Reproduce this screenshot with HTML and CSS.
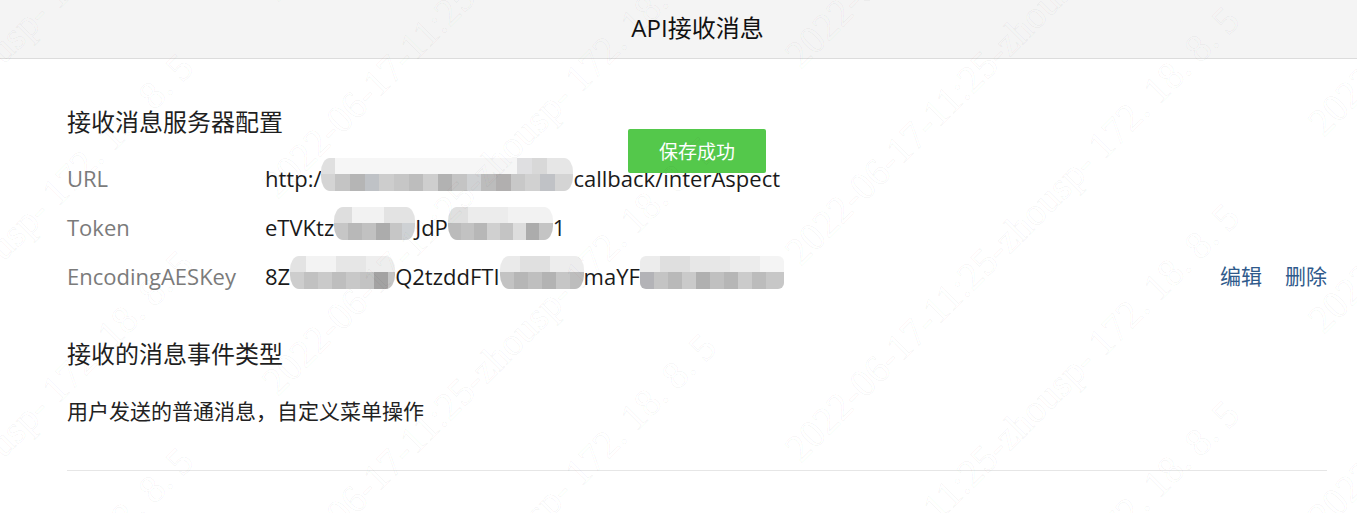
FILE: index.html
```html
<!DOCTYPE html>
<html lang="zh-CN">
<head>
<meta charset="utf-8">
<title>API接收消息</title>
<link rel="stylesheet" href="styles.css">
</head>
<body>
<div class="page">
  <header class="topbar">
    <h1 class="topbar-title">API接收消息</h1>
  </header>

  <main class="content">
    <section class="block">
      <h2 class="block-title">接收消息服务器配置</h2>
      <div class="row">
        <span class="label">URL</span>
        <span class="value">http:/<span class="mosaic mz-url"></span>callback/interAspect</span>
      </div>
      <div class="row">
        <span class="label">Token</span>
        <span class="value">eTVKtz<span class="mosaic mz-tok1"></span>JdP<span class="mosaic mz-tok2"></span>1</span>
      </div>
      <div class="row">
        <span class="label">EncodingAESKey</span>
        <span class="value">8Z<span class="mosaic mz-aes1"></span>Q2tzddFTI<span class="mosaic mz-aes2"></span>maYF<span class="mosaic mz-aes3"></span></span>
        <span class="actions"><a class="action">编辑</a><a class="action">删除</a></span>
      </div>
    </section>

    <section class="block block-events">
      <h2 class="block-title">接收的消息事件类型</h2>
      <p class="desc">用户发送的普通消息，自定义菜单操作</p>
    </section>

    <div class="divider"></div>
  </main>

  <div class="toast">保存成功</div>

  <div class="watermark" aria-hidden="true">
    <span class="wm" style="left:-246px;top:281px">2022-06-17-11:25-zhousp- 172. 18. 8. 5</span>
    <span class="wm" style="left:-246px;top:478px">2022-06-17-11:25-zhousp- 172. 18. 8. 5</span>
    <span class="wm" style="left:-246px;top:675px">2022-06-17-11:25-zhousp- 172. 18. 8. 5</span>
    <span class="wm" style="left:-246px;top:872px">2022-06-17-11:25-zhousp- 172. 18. 8. 5</span>
    <span class="wm" style="left:277px;top:-30px">2022-06-17-11:25-zhousp- 172. 18. 8. 5</span>
    <span class="wm" style="left:277px;top:167px">2022-06-17-11:25-zhousp- 172. 18. 8. 5</span>
    <span class="wm" style="left:277px;top:364px">2022-06-17-11:25-zhousp- 172. 18. 8. 5</span>
    <span class="wm" style="left:277px;top:561px">2022-06-17-11:25-zhousp- 172. 18. 8. 5</span>
    <span class="wm" style="left:277px;top:758px">2022-06-17-11:25-zhousp- 172. 18. 8. 5</span>
    <span class="wm" style="left:800px;top:37px">2022-06-17-11:25-zhousp- 172. 18. 8. 5</span>
    <span class="wm" style="left:800px;top:234px">2022-06-17-11:25-zhousp- 172. 18. 8. 5</span>
    <span class="wm" style="left:800px;top:431px">2022-06-17-11:25-zhousp- 172. 18. 8. 5</span>
    <span class="wm" style="left:800px;top:628px">2022-06-17-11:25-zhousp- 172. 18. 8. 5</span>
    <span class="wm" style="left:800px;top:825px">2022-06-17-11:25-zhousp- 172. 18. 8. 5</span>
    <span class="wm" style="left:1323px;top:105px">2022-06-17-11:25-zhousp- 172. 18. 8. 5</span>
    <span class="wm" style="left:1323px;top:302px">2022-06-17-11:25-zhousp- 172. 18. 8. 5</span>
    <span class="wm" style="left:1323px;top:499px">2022-06-17-11:25-zhousp- 172. 18. 8. 5</span>
  </div>
</div>
</body>
</html>
```

FILE: styles.css
```css
* {
  box-sizing: border-box;
}

html, body {
  margin: 0;
  padding: 0;
  background: #ffffff;
}

body {
  font-family: "Open Sans", "Noto Sans CJK SC", sans-serif;
  color: #1d1d1d;
  width: 1357px;
  height: 513px;
  overflow: hidden;
}

.page {
  position: relative;
  width: 1357px;
  height: 513px;
  overflow: hidden;
}

/* ---------- top bar ---------- */
.topbar {
  height: 59px;
  background: #f4f4f4;
  border-bottom: 1px solid #dcdcdc;
  display: flex;
  align-items: center;
  justify-content: center;
  padding-left: 38px;
}

.topbar-title {
  margin: 0;
  font-size: 24px;
  font-weight: normal;
  line-height: 32px;
  color: #111111;
  padding-bottom: 3px;
}

/* ---------- content ---------- */
.content {
  padding: 47px 30px 0 67px;
}

.block-title {
  margin: 0 0 16px;
  font-size: 24px;
  font-weight: normal;
  line-height: 32px;
  color: #1f1f1f;
}

.row {
  display: flex;
  align-items: center;
  height: 49px;
  line-height: 49px;
  font-size: 22px;
}

.label {
  width: 198px;
  flex: none;
  color: #7b7b7b;
}

.value {
  flex: 1;
  color: #1a1a1a;
  white-space: nowrap;
}

.actions {
  display: flex;
  gap: 23px;
  flex: none;
  font-size: 21px;
}

.action {
  color: #2f5a8b;
  cursor: pointer;
}

.block-events {
  margin-top: 37px;
}

.block-events .block-title {
  margin-bottom: 26px;
}

.desc {
  margin: 0;
  font-size: 21px;
  line-height: 30px;
  color: #222222;
}

.divider {
  margin-top: 44px;
  height: 1px;
  background: #e6e6e6;
}

/* ---------- mosaics (pixelated redactions) ---------- */
.mosaic {
  display: inline-block;
  height: 33px;
  vertical-align: -4px;
  border-radius: 9px / 14px;
}

.mz-url {
  width: 252px;
  background:
    linear-gradient(90deg, #e0e0e0 0 14px, #f6f6f6 14px 196px, #dfdfe1 196px 211px, #d8d8d8 211px 226px, #e6e6e6 226px 252px) top / 100% 16px no-repeat,
    linear-gradient(90deg, #d4d4d4 0 14px, #c4c4c4 14px 29px, #b5b5b5 29px 44px, #bfc2c6 44px 58px, #cdcdcd 58px 73px, #c6c6c6 73px 88px, #bdbdbd 88px 102px, #cecece 102px 117px, #b2b2b2 117px 131px, #c4c4c4 131px 146px, #cfd1d3 146px 160px, #bcbcbc 160px 175px, #b1afaf 175px 190px, #c8c8c8 190px 204px, #d1d1d1 204px 219px, #c0c2c6 219px 234px, #d4d4d4 234px 252px) bottom / 100% 17px no-repeat;
}

.mz-tok1 {
  width: 81px;
  background:
    linear-gradient(90deg, #dedede 0 18px, #f2f2f2 18px 50px, #e3e3e3 50px 81px) top / 100% 16px no-repeat,
    linear-gradient(90deg, #c6c6c6 0 14px, #b8b8b8 14px 28px, #c1c1c1 28px 42px, #acacac 42px 56px, #c6c6c6 56px 68px, #ced1d4 68px 81px) bottom / 100% 17px no-repeat;
}

.mz-tok2 {
  width: 105px;
  background:
    linear-gradient(90deg, #e0e0e0 0 20px, #ececec 20px 60px, #f2f2f2 60px 105px) top / 100% 16px no-repeat,
    linear-gradient(90deg, #bbbbbb 0 13px, #c2c2c2 13px 26px, #b7b7b7 26px 39px, #d0d0d0 39px 52px, #c4c4c4 52px 65px, #dddddd 65px 78px, #acacac 78px 91px, #c4c4c4 91px 105px) bottom / 100% 17px no-repeat;
}

.mz-aes1 {
  width: 105px;
  background:
    linear-gradient(90deg, #e3e3e3 0 16px, #f3f3f3 16px 46px, #e6e6e6 46px 76px, #eeeeee 76px 105px) top / 100% 16px no-repeat,
    linear-gradient(90deg, #cdcdcd 0 14px, #c1c1c1 14px 28px, #cacaca 28px 42px, #bebebe 42px 56px, #c8c8c8 56px 70px, #c3c3c3 70px 84px, #a3a2a2 84px 98px, #c4c4c4 98px 105px) bottom / 100% 17px no-repeat;
}

.mz-aes2 {
  width: 84px;
  background:
    linear-gradient(90deg, #eaeaea 0 20px, #e0e0e0 20px 50px, #ededed 50px 84px) top / 100% 16px no-repeat,
    linear-gradient(90deg, #c3c3c3 0 14px, #b6b6b6 14px 28px, #bfbfbf 28px 42px, #b3b3b3 42px 56px, #c6c6c6 56px 70px, #bdbdbd 70px 84px) bottom / 100% 17px no-repeat;
}

.mz-aes3 {
  width: 144px;
  background:
    linear-gradient(90deg, #ececec 0 20px, #dfdfdf 20px 50px, #e7e7e7 50px 90px, #ececec 90px 120px, #f4f4f4 120px 144px) top / 100% 16px no-repeat,
    linear-gradient(90deg, #b3b3b7 0 14px, #c4c4c4 14px 28px, #b9b9b9 28px 42px, #cacaca 42px 56px, #b0b0b0 56px 70px, #c0c0c0 70px 84px, #b6b6b6 84px 98px, #cbcbcb 98px 112px, #bcbcbc 112px 126px, #c7c7c7 126px 144px) bottom / 100% 17px no-repeat;
  border-radius: 6px;
}

/* ---------- toast ---------- */
.toast {
  position: absolute;
  left: 628px;
  top: 129px;
  width: 138px;
  height: 44px;
  background: #54c84b;
  color: #ffffff;
  font-family: "Noto Sans CJK SC", sans-serif;
  font-size: 19px;
  line-height: 44px;
  text-align: center;
  border-radius: 2px;
  z-index: 5;
}

/* ---------- watermark ---------- */
.watermark {
  position: absolute;
  inset: 0;
  pointer-events: none;
  z-index: 10;
}

.wm {
  position: absolute;
  white-space: nowrap;
  font-family: "Liberation Serif", serif;
  font-size: 39px;
  line-height: 39px;
  color: transparent;
  -webkit-text-stroke: 1px rgba(0, 0, 0, 0.04);
  transform-origin: 0 32px;
  transform: rotate(-45deg);
}
```
